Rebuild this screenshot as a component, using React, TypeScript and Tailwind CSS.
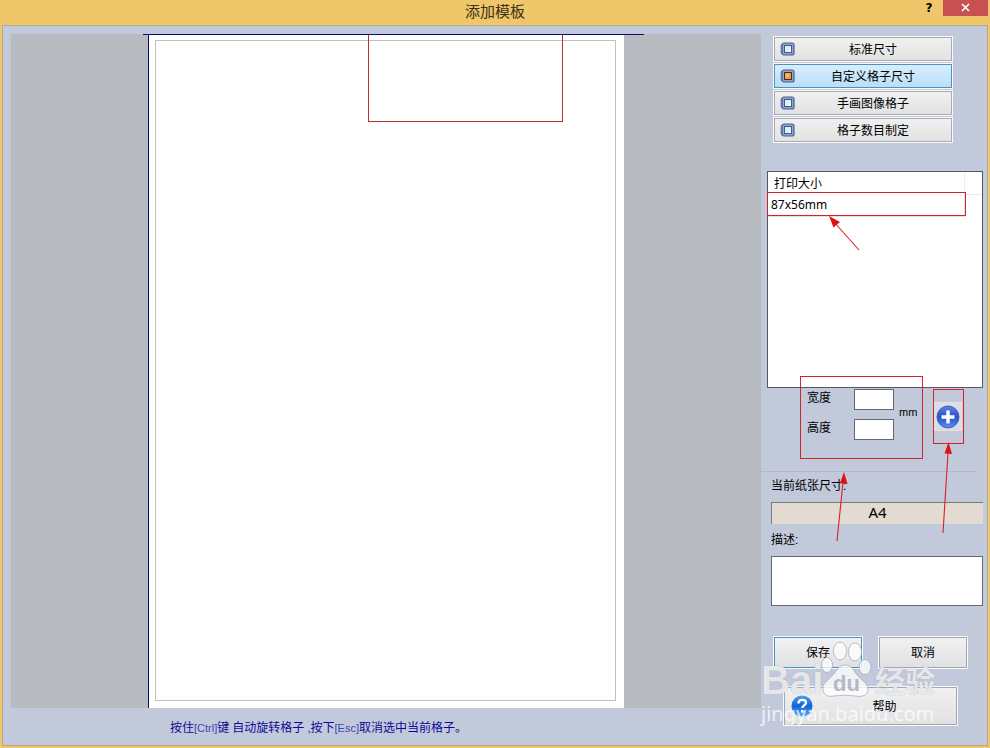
import React, { useState } from "react";

const modes = ["标准尺寸", "自定义格子尺寸", "手画图像格子", "格子数目制定"];

const uiFont = "font-['Liberation_Sans','Noto_Sans_CJK_SC',sans-serif]";
const cjkFont = "font-['Noto_Sans_CJK_SC',sans-serif]";

function ModeIcon({ active }: { active: boolean }) {
  return (
    <svg width="15" height="14" viewBox="0 0 15 14" aria-hidden="true">
      <rect x="0.5" y="2" width="4" height="10" rx="1.5" fill="#8796b8" />
      <rect x="2" y="1" width="12" height="12" rx="2" fill="#8fa5cf" stroke="#4a5f8d" strokeWidth="1.2" />
      <rect x="4.5" y="3.5" width="7" height="7" fill={active ? "#f09a3c" : "#d9effa"} stroke={active ? "#3c3434" : "#405a8c"} />
      {active ? <rect x="6" y="5" width="3" height="3" fill="#f8b868" /> : <path d="M8 10h3V6z" fill="#fff" />}
    </svg>
  );
}

function PlusIcon() {
  return (
    <svg width="24" height="24" viewBox="0 0 24 24" aria-hidden="true">
      <defs>
        <linearGradient id="plusFill" x1="0" y1="0" x2="0" y2="1">
          <stop offset="0" stopColor="#5f86e4" />
          <stop offset="0.5" stopColor="#2450c4" />
          <stop offset="1" stopColor="#5a92f4" />
        </linearGradient>
      </defs>
      <circle cx="12" cy="12" r="11" fill="url(#plusFill)" stroke="#4760b4" />
      <path d="M12 5.5v13M5.5 12h13" stroke="#fff" strokeWidth="3.4" />
    </svg>
  );
}

function HelpIcon() {
  return (
    <svg width="22" height="22" viewBox="0 0 22 22" aria-hidden="true">
      <defs>
        <linearGradient id="helpFill" x1="0" y1="0" x2="0" y2="1">
          <stop offset="0" stopColor="#4f9df0" />
          <stop offset="0.5" stopColor="#1263d6" />
          <stop offset="1" stopColor="#4fb2fa" />
        </linearGradient>
      </defs>
      <circle cx="11" cy="11" r="10.5" fill="url(#helpFill)" />
      <path d="M7.5 8.5c0-5 7.500-4.500 7.500-.8 0 2.600-3.700 2.700-3.700 5.300" fill="none" stroke="#fff" strokeWidth="2.4" />
      <rect x="10" y="15" width="2.6" height="2.6" fill="#fff" />
    </svg>
  );
}

function Marks() {
  return (
    <svg className="pointer-events-none absolute top-0 left-0" width="226" height="560" viewBox="761 26 226 560" aria-hidden="true">
      <g fill="none" stroke="#d0232b">
        <rect x="767.5" y="192.5" width="198" height="23" />
        <rect x="800.5" y="376.5" width="122" height="82" />
        <rect x="933.5" y="389.5" width="30" height="54" />
      </g>
      <g stroke="#dc1f26" strokeWidth="1.1">
        <path d="M859 250L834 222M837 541L843 482M943 533L948 453" />
      </g>
      <g fill="#dc1414">
        <path d="M829 216l11 6-6.500 5.500z" />
        <path d="M844 472l3.500 12-7.500-.8z" />
        <path d="M948.500 442l3.500 12-7.500-.4z" />
      </g>
    </svg>
  );
}

function Watermark() {
  return (
    <div className="pointer-events-none absolute top-[614px] left-0 text-white/75">
      <div className="flex h-[60px] items-end">
        <span className="w-[60px] font-['Liberation_Sans',sans-serif] text-[40px] leading-[40px] font-bold [text-shadow:0_0_1px_#9aa0b0]">Bai</span>
        <div className="relative h-[60px] w-[54px]">
          <svg width="54" height="60" viewBox="0 0 54 60" fill="currentColor" stroke="#a9aebb" strokeWidth="0.8" aria-hidden="true">
            <ellipse cx="19" cy="11" rx="6.5" ry="9" />
            <ellipse cx="34" cy="12" rx="6.5" ry="9" />
            <ellipse cx="6" cy="25" rx="5.5" ry="7.5" />
            <ellipse cx="44" cy="27" rx="6" ry="7.500" />
            <path d="M24 25c-6 0-8 5-12 10C6 41 1 44 2 50c1 6 6 7 11 6 7-1 14-1 21 0 7 1 13 0 13-7 0-6-7-9-11-14-4-6-6-10-12-10z" />
          </svg>
          <span className="absolute top-[32px] left-3 font-['Liberation_Sans',sans-serif] text-[22px] leading-6 font-bold text-[#b4b9c6]">du</span>
        </div>
        <span className={`${cjkFont} text-[30px] leading-[42px] font-bold [text-shadow:0_0_1px_#9aa0b0]`}>经验</span>
      </div>
      <div className="mt-[2px] font-['Noto_Sans',sans-serif] text-[20px] leading-6">jingyan.baidu.com</div>
    </div>
  );
}

const pushButton =
  "border bg-gradient-to-b from-[#f1f1f2] to-[#e1e1e3] outline outline-white/90 text-xs text-black";

export default function App() {
  const [mode, setMode] = useState(1);
  return (
    <div className={`${uiFont} flex min-h-screen flex-col bg-[#efc669] text-xs text-black`}>
      <header className="flex h-[25px] items-start">
        <div className="w-[71px]" />
        <h1 className={`${cjkFont} flex-1 text-center text-[15px] leading-[22px] text-[#3b3118]`}>添加模板</h1>
        <button aria-label="Help" className="mr-1 h-4 w-5 font-['DejaVu_Sans',sans-serif] text-xs leading-4 font-bold">?</button>
        <button aria-label="Close" className="mr-[2px] flex h-4 w-[45px] items-center justify-center bg-[#c75050]">
          <svg width="9" height="11" viewBox="0 0 9 11" stroke="#fff" strokeWidth="1.6" aria-hidden="true">
            <path d="M1 1l7 7M8 1L1 8" />
          </svg>
        </button>
      </header>

      <main className="mx-[2px] mb-[2px] flex flex-1 border border-[#b5a88c] bg-[#c2c9db]">
        <section className="flex flex-1 flex-col pt-2 pl-2">
          <div className="flex flex-1 justify-center bg-[#b8bcc0]">
            <div className="relative flex w-[476px] border-t border-l border-[#0a0a78] bg-white px-[6px] pt-[5px] pb-[7px]">
              <div className="mr-[2px] flex-1 border border-[#c0bfbf]" />
              <div className="absolute -top-px -left-[6px] h-px w-[501px] bg-[#0a0a78]" />
              <div className="absolute top-0 left-[219px] h-[87px] w-[195px] border-x border-b border-[#b82f2f]" />
            </div>
          </div>
          <p className="h-[37px] pl-[159px] text-[11px] leading-10 text-[#0a0a96]">
            <span className="text-xs">按住</span>
            <span className="text-[#3c46b8]">[Ctrl]</span>
            <span className="text-xs">键</span> <span className="text-xs">自动旋转格子</span> ,<span className="text-xs">按下</span>
            <span className="text-[#3c46b8]">[Esc]</span>
            <span className="text-xs">取消选中当前格子。</span>
          </p>
        </section>

        <aside className="relative flex w-[226px] flex-col pr-1">
          <div className="mt-[11px] ml-[13px] flex w-[178px] flex-col gap-[3px]">
            {modes.map((label, i) => (
              <button
                key={label}
                onClick={() => setMode(i)}
                aria-pressed={mode === i}
                className={`flex h-6 items-center border pl-[5px] outline outline-white/90 ${
                  mode === i
                    ? "border-[#4d92bd] bg-gradient-to-b from-[#d8edfc] to-[#b9dff8]"
                    : "border-[#a9abb0] bg-gradient-to-b from-[#f0f0f0] to-[#e2e2e3]"
                }`}
              >
                <ModeIcon active={mode === i} />
                <span className="flex-1 pt-px text-center">{label}</span>
              </button>
            ))}
          </div>

          <div className="mt-[29px] ml-[6px] h-[217px] border border-[#55585e] bg-white">
            <table className="w-full border-collapse text-left">
              <thead>
                <tr className="h-[22px]">
                  <th className="border-r border-[#ececec] pt-[2px] pl-[6px] font-normal">打印大小</th>
                  <th className="w-[18px] border-b border-[#ececec]" />
                </tr>
              </thead>
              <tbody>
                <tr className="h-[22px]">
                  <td className="border-r border-b border-[#e5e0d8] pl-[3px] font-['Noto_Sans',sans-serif]">87x56mm</td>
                  <td />
                </tr>
              </tbody>
            </table>
          </div>

          <div className="ml-[46px] flex h-[83px]">
            <div className="flex w-[87px] flex-col gap-[9px] pt-px">
              <label className="flex h-[21px] justify-between leading-[18px]">
                宽度
                <input className="h-[21px] w-10 border border-[#64686f] bg-white px-1" />
              </label>
              <label className="flex h-[21px] justify-between leading-[18px]">
                高度
                <input className="h-[21px] w-10 border border-[#64686f] bg-white px-1" />
              </label>
            </div>
            <span className="ml-[5px] w-[35px] pt-4 text-[11px] leading-4">mm</span>
            <button aria-label="Add" className="mt-[14px] flex h-[29px] w-[28px] items-center justify-center border border-[#e9e1dc] bg-[#d9dceb]">
              <PlusIcon />
            </button>
          </div>

          <div className="mr-[6px] border-t border-[#b3b8c6]" />
          <div className="flex flex-col pl-[10px]">
            <div className="pt-1 leading-5">当前纸张尺寸:</div>
            <div className="mt-[6px] h-[22px] border-t border-l border-[#777a82] bg-[#e3dad1] text-center font-['Noto_Sans',sans-serif] text-[15px] leading-[18px]">A4</div>
            <label htmlFor="description" className="mt-[6px] leading-5">描述:</label>
            <textarea id="description" className="mt-[6px] block h-[50px] resize-none border border-[#64686f] bg-white p-1" />
          </div>

          <div className="mt-[31px] ml-[13px] flex gap-[17px]">
            <button className={`${pushButton} h-[31px] w-[88px] border-[#4a94c4]`}>保存</button>
            <button className={`${pushButton} h-[31px] w-[88px] border-[#a3a6ae]`}>取消</button>
          </div>
          <button className={`${pushButton} mt-[19px] ml-[23px] flex h-[38px] w-[173px] items-center border-[#a3a6ae] pl-[6px]`}>
            <HelpIcon />
            <span className="flex-1 pt-px text-center">帮助</span>
          </button>

          <Marks />
          <Watermark />
        </aside>
      </main>
    </div>
  );
}
